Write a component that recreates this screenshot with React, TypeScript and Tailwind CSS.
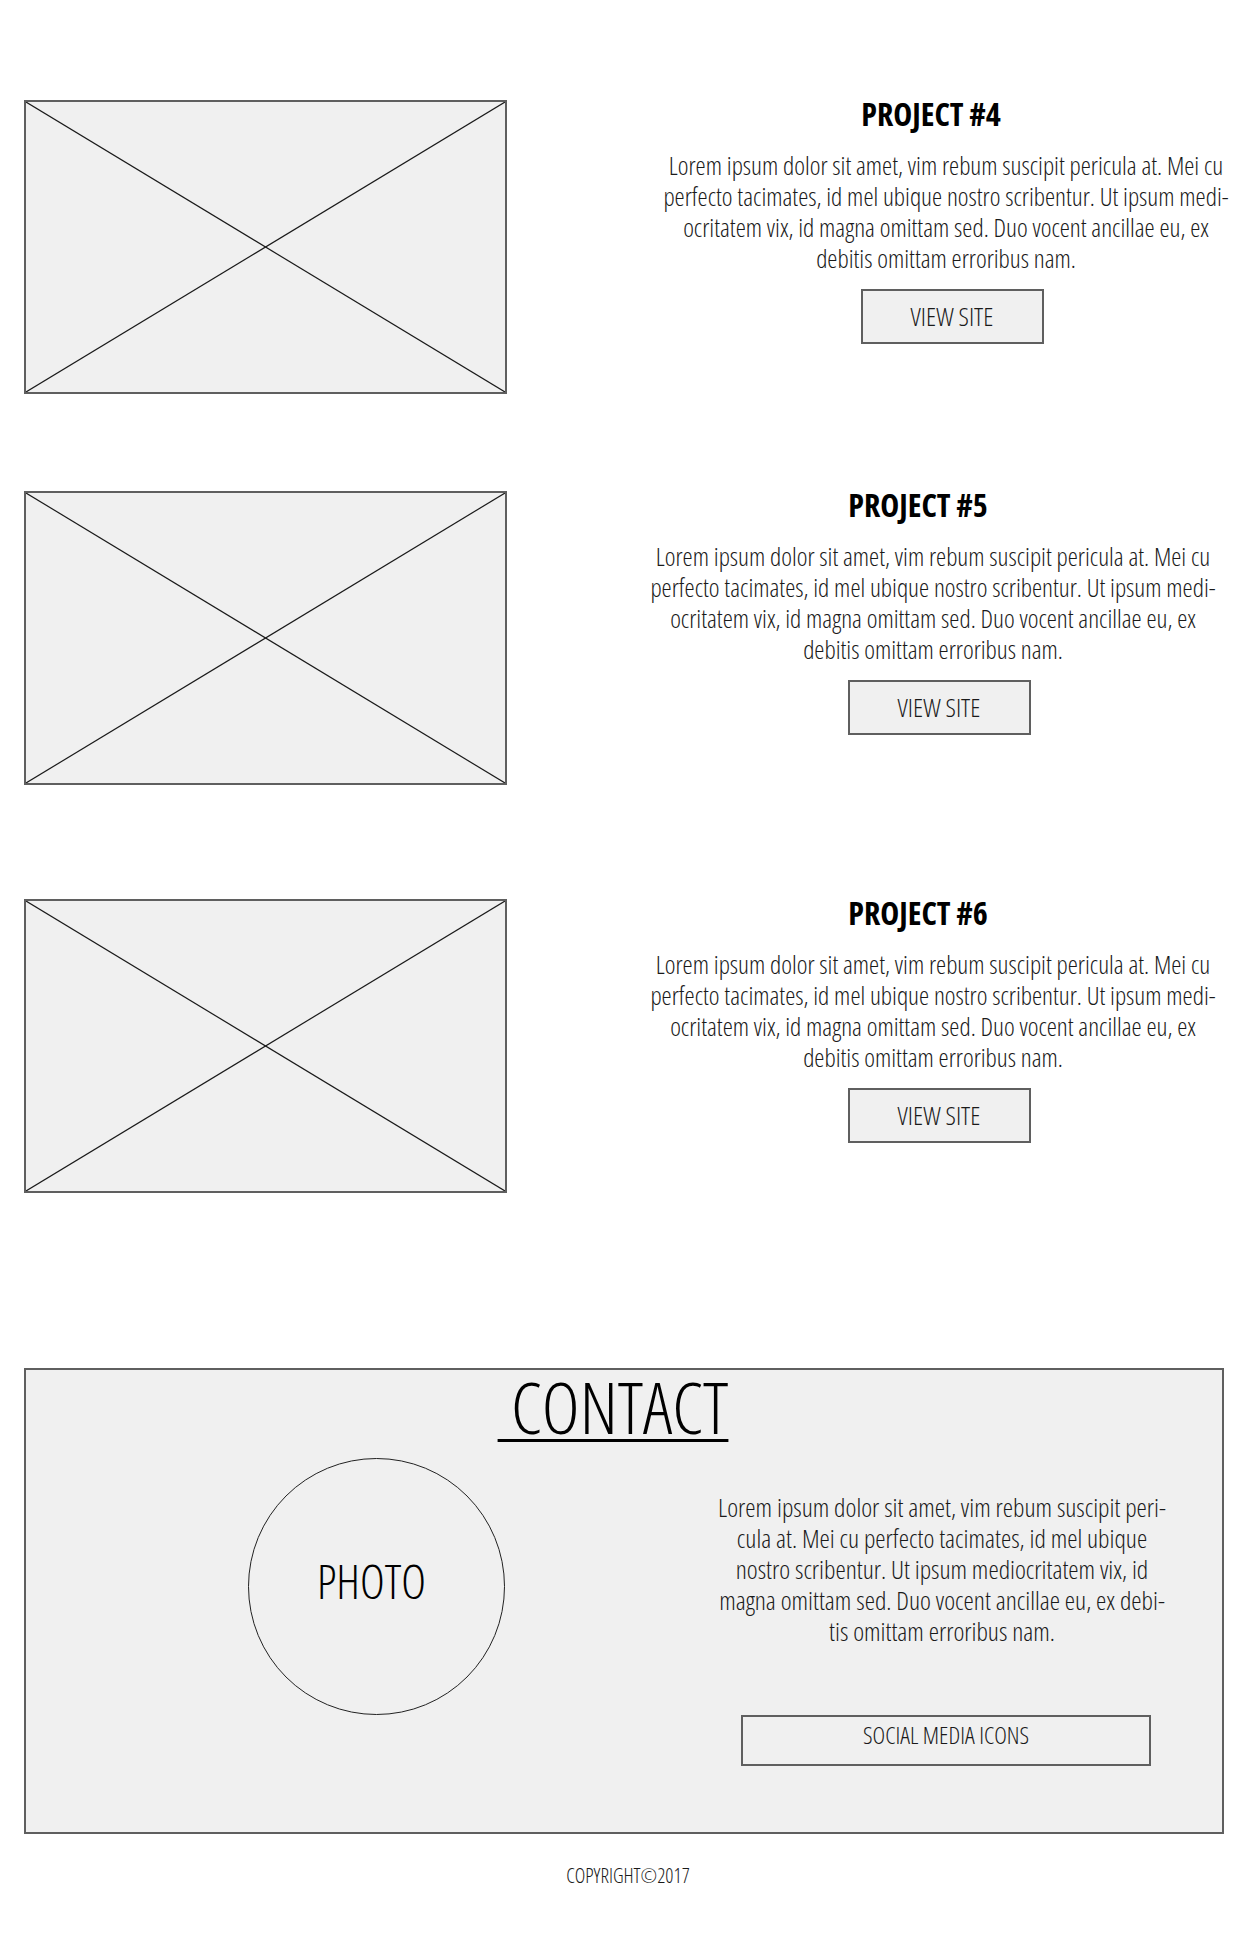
const projects = [
  { name: "PROJECT #4", top: "mt-[95px]", shift: "pl-[136px]" },
  { name: "PROJECT #5", top: "mt-[92px]", shift: "pl-[110px]" },
  { name: "PROJECT #6", top: "mt-[109px]", shift: "pl-[110px]" },
];

const blurb = [
  "Lorem ipsum dolor sit amet, vim rebum suscipit pericula at. Mei cu",
  "perfecto tacimates, id mel ubique nostro scribentur. Ut ipsum medi-",
  "ocritatem vix, id magna omittam sed. Duo vocent ancillae eu, ex",
  "debitis omittam erroribus nam.",
];

const contactBlurb = [
  "Lorem ipsum dolor sit amet, vim rebum suscipit peri-",
  "cula at. Mei cu perfecto tacimates, id mel ubique",
  "nostro scribentur. Ut ipsum mediocritatem vix, id",
  "magna omittam sed. Duo vocent ancillae eu, ex debi-",
  "tis omittam erroribus nam.",
];

function Placeholder() {
  return (
    <div className="relative mt-[5px] ml-[24px] h-[294px] w-[483px] shrink-0 border-2 border-[#5f5f5f] bg-[#f0f0f0]">
      <svg className="absolute inset-0 h-full w-full" viewBox="0 0 100 100" preserveAspectRatio="none">
        <line x1="0" y1="0" x2="100" y2="100" stroke="#1a1a1a" strokeWidth="1.2" vectorEffect="non-scaling-stroke" />
        <line x1="100" y1="0" x2="0" y2="100" stroke="#1a1a1a" strokeWidth="1.2" vectorEffect="non-scaling-stroke" />
      </svg>
    </div>
  );
}

function ProjectRow({ name, top, shift }: { name: string; top: string; shift: string }) {
  return (
    <div className={`flex items-start ${top}`}>
      <Placeholder />
      <div className={`flex flex-1 flex-col items-center ${shift}`}>
        <h2 className="mr-[30px] text-[32px] leading-[37px] font-bold text-black">{name}</h2>
        <p className="mt-[18px] text-center text-[25.6px] leading-[31px] font-light text-[#1a1a1a]">
          {blurb.map((line) => (
            <span key={line} className="block whitespace-nowrap">
              {line}
            </span>
          ))}
        </p>
        <button
          type="button"
          className="mt-[15px] ml-[12px] flex h-[55px] w-[183px] items-center justify-center border-2 border-[#5f5f5f] bg-[#f0f0f0] text-[26px] font-light text-[#1a1a1a]"
        >
          VIEW SITE
        </button>
      </div>
    </div>
  );
}

export default function App() {
  return (
    <div className="h-[1954px] w-[1249px] overflow-hidden bg-white font-['Open_Sans','Liberation_Sans',sans-serif] font-stretch-condensed">
      {projects.map((p) => (
        <ProjectRow key={p.name} {...p} />
      ))}

      <section className="mt-[175px] ml-[24px] h-[466px] w-[1200px] border-2 border-[#5f5f5f] bg-[#f0f0f0]">
        <h1 className="pr-[22px] text-center text-[72px] leading-[72px] font-light text-black">
          <span className="underline decoration-[3px] underline-offset-[5px]">{"\u00a0CONTACT"}</span>
        </h1>
        <div className="flex items-start">
          <div className="mt-[16px] ml-[222px] flex h-[257px] w-[257px] shrink-0 items-center justify-center rounded-full border border-[#222]">
            <span className="mr-[10px] mb-[10px] text-[47px] font-light text-black">PHOTO</span>
          </div>
          <div className="ml-[207px] flex w-[460px] flex-col items-center">
            <p className="mt-[50px] text-center text-[26px] leading-[31px] font-light text-[#1a1a1a]">
              {contactBlurb.map((line) => (
                <span key={line} className="block whitespace-nowrap">
                  {line}
                </span>
              ))}
            </p>
            <div className="mt-[68px] ml-[8px] h-[51px] w-[410px] border-2 border-[#5f5f5f] pt-[1px] text-center text-[24px] leading-[33px] font-light text-[#1a1a1a]">
              SOCIAL MEDIA ICONS
            </div>
          </div>
        </div>
      </section>

      <footer className="mt-[31px] pl-[7px] text-center text-[20px] leading-[21px] font-light text-[#1a1a1a]">
        COPYRIGHT©2017
      </footer>
    </div>
  );
}
